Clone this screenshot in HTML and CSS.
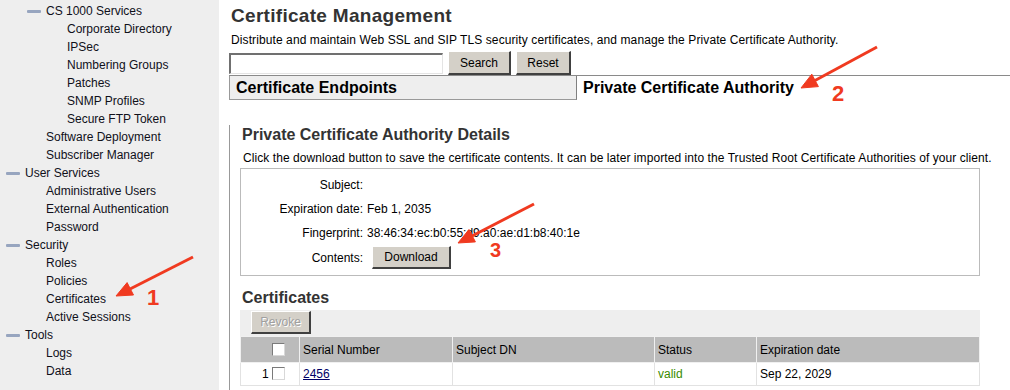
FILE: index.html
```html
<!DOCTYPE html>
<html lang="en">

<head>
    <meta charset="utf-8">
    <title>Certificate Management</title>
    <link rel="stylesheet" href="styles.css">
</head>

<body>
    <div class="page">
        <nav class="sidebar">
            <ul class="tree sub">
                <li class="open">
                    <div class="row"><span class="tg"></span>CS 1000 Services</div>
                    <ul class="tree">
                        <li><div class="row"><span class="tg"></span>Corporate Directory</div></li>
                        <li><div class="row"><span class="tg"></span>IPSec</div></li>
                        <li><div class="row"><span class="tg"></span>Numbering Groups</div></li>
                        <li><div class="row"><span class="tg"></span>Patches</div></li>
                        <li><div class="row"><span class="tg"></span>SNMP Profiles</div></li>
                        <li><div class="row"><span class="tg"></span>Secure FTP Token</div></li>
                    </ul>
                </li>
                <li><div class="row"><span class="tg"></span>Software Deployment</div></li>
                <li><div class="row"><span class="tg"></span>Subscriber Manager</div></li>
            </ul>
            <ul class="tree root">
                <li class="open">
                    <div class="row"><span class="tg"></span>User Services</div>
                    <ul class="tree">
                        <li><div class="row"><span class="tg"></span>Administrative Users</div></li>
                        <li><div class="row"><span class="tg"></span>External Authentication</div></li>
                        <li><div class="row"><span class="tg"></span>Password</div></li>
                    </ul>
                </li>
                <li class="open">
                    <div class="row"><span class="tg"></span>Security</div>
                    <ul class="tree">
                        <li><div class="row"><span class="tg"></span>Roles</div></li>
                        <li><div class="row"><span class="tg"></span>Policies</div></li>
                        <li><div class="row"><span class="tg"></span>Certificates</div></li>
                        <li><div class="row"><span class="tg"></span>Active Sessions</div></li>
                    </ul>
                </li>
                <li class="open">
                    <div class="row"><span class="tg"></span>Tools</div>
                    <ul class="tree">
                        <li><div class="row"><span class="tg"></span>Logs</div></li>
                        <li><div class="row"><span class="tg"></span>Data</div></li>
                    </ul>
                </li>
            </ul>
        </nav>

        <main class="main">
            <h1 class="title">Certificate Management</h1>
            <p class="desc">Distribute and maintain Web SSL and SIP TLS security certificates, and manage the Private Certificate Authority.</p>
            <form class="search" onsubmit="return false">
                <input type="text" class="search-input">
                <button class="btn btn-search">Search</button>
                <button class="btn btn-reset">Reset</button>
            </form>

            <div class="tabs">
                <div class="tab">Certificate Endpoints</div>
                <div class="tab active">Private Certificate Authority</div>
            </div>

            <div class="panel">
                <h2 class="section-title first">Private Certificate Authority Details</h2>
                <p class="hint">Click the download button to save the certificate contents. It can be later imported into the Trusted Root Certificate Authorities of your client.</p>
                <div class="details">
                    <div class="lbl">Subject:</div>
                    <div class="val"></div>
                    <div class="lbl">Expiration date:</div>
                    <div class="val">Feb 1, 2035</div>
                    <div class="lbl">Fingerprint:</div>
                    <div class="val">38:46:34:ec:b0:55:d9:a0:ae:d1:b8:40:1e</div>
                    <div class="lbl mid">Contents:</div>
                    <div class="val mid"><button class="btn btn-download">Download</button></div>
                </div>

                <h2 class="section-title">Certificates</h2>
                <div class="toolbar">
                    <button class="btn btn-revoke" disabled>Revoke</button>
                </div>
                <table class="cert-table">
                    <thead>
                        <tr>
                            <th class="col-check"><input type="checkbox" class="chk"></th>
                            <th class="col-serial">Serial Number</th>
                            <th class="col-dn">Subject DN</th>
                            <th class="col-status">Status</th>
                            <th>Expiration date</th>
                        </tr>
                    </thead>
                    <tbody>
                        <tr>
                            <td class="col-check">1 <input type="checkbox" class="chk"></td>
                            <td><a href="#" class="serial">2456</a></td>
                            <td></td>
                            <td class="valid">valid</td>
                            <td>Sep 22, 2029</td>
                        </tr>
                    </tbody>
                </table>
            </div>
        </main>
    </div>

    <svg class="marks" width="1010" height="390" viewBox="0 0 1010 390">
        <g fill="#f03a20" stroke="#f03a20">
            <line x1="193" y1="257" x2="130" y2="289" stroke-width="3" />
            <polygon points="116,296 133.5,295 127.1,282.6" stroke-width="1" />
            <line x1="877" y1="47" x2="815" y2="80.5" stroke-width="3" />
            <polygon points="801,88 818.4,86.6 811.8,74.2" stroke-width="1" />
            <line x1="534" y1="204" x2="472" y2="236" stroke-width="3" />
            <polygon points="458,243 475.4,241.9 469,229.5" stroke-width="1" />
        </g>
        <g class="mark-num" fill="#f03a20">
            <text x="147" y="305">1</text>
            <text x="832" y="101">2</text>
            <text x="490" y="257" class="small">3</text>
        </g>
    </svg>
</body>

</html>
```

FILE: styles.css
```css
body {
    margin: 0;
    font-family: "Liberation Sans", Arial, sans-serif;
    font-size: 12px;
    color: #000;
    background: #fff;
    overflow: hidden;
}

.page {
    display: flex;
    height: 390px;
    overflow: hidden;
}

/* left navigation tree */
.sidebar {
    width: 219px;
    flex-shrink: 0;
    background: #eeeeee;
    padding-top: 2px;
    color: #10101a;
}

.tree {
    list-style: none;
    margin: 0;
    padding: 0 0 0 21px;
}

.tree.root {
    padding-left: 6px;
}

.tree.sub {
    padding-left: 27px;
}

.row {
    display: flex;
    align-items: center;
    height: 18px;
    white-space: nowrap;
}

.tg {
    width: 19px;
    flex-shrink: 0;
    display: flex;
    align-items: center;
}

.open > .row .tg::before {
    content: "";
    width: 14px;
    height: 3px;
    border-radius: 1px;
    background: #97a5bf;
}

/* main area */
.main {
    flex: 1;
    padding-left: 10px;
    min-width: 0;
}

.title {
    margin: 0 0 0 2px;
    padding-top: 4px;
    font-size: 19px;
    line-height: 24px;
    font-weight: bold;
    letter-spacing: 0.3px;
    color: #333;
}

.desc {
    margin: 4px 0 0 2px;
    line-height: 16px;
    letter-spacing: 0.1px;
}

.search {
    display: flex;
    align-items: center;
    height: 24px;
    margin: 3px 0 0;
}

.search-input {
    box-sizing: border-box;
    width: 214px;
    height: 21px;
    margin: 0;
    border-style: solid;
    border-width: 2px 1px 1px 2px;
    border-color: #707070 #e4e4e4 #e4e4e4 #707070;
    background: #fff;
}

.btn {
    box-sizing: border-box;
    height: 24px;
    margin: 0;
    padding: 0;
    font-family: "Liberation Sans", Arial, sans-serif;
    font-size: 12px;
    color: #000;
    background: #d4d0c8;
    border-style: solid;
    border-width: 1px 2px 2px 1px;
    border-color: #ffffff #404040 #404040 #ffffff;
}

.btn-search {
    width: 63px;
    margin-left: 5px;
}

.btn-reset {
    width: 55px;
    margin-left: 5px;
}

/* tabs */
.tabs {
    display: flex;
    border-top: 1px solid #8a8a8a;
}

.tab {
    box-sizing: border-box;
    height: 24px;
    padding-left: 6px;
    font-size: 16px;
    font-weight: bold;
    line-height: 23px;
    white-space: nowrap;
}

.tab:first-child {
    width: 348px;
    background: #eeeeee;
    border-left: 1px solid #999;
    border-right: 1px solid #808080;
    border-bottom: 1px solid #999;
}

.tab.active {
    background: #fff;
}

.panel {
    border-left: 1px solid #999;
    padding: 0 0 20px 10px;
    width: 740px;
}

.section-title {
    margin: 12px 0 0 2px;
    font-size: 16px;
    line-height: 20px;
    font-weight: bold;
    color: #333;
}

.section-title.first {
    margin-top: 25px;
}

.hint {
    margin: 5px 0 0 3px;
    line-height: 16px;
    letter-spacing: 0.07px;
    white-space: nowrap;
}

.details {
    box-sizing: border-box;
    margin-top: 2px;
    width: 740px;
    border: 1px solid #bbbbbb;
    padding: 8px 0 6px;
    display: grid;
    grid-template-columns: 122px 1fr;
    grid-template-rows: 24px 24px 21px 23px;
    column-gap: 4px;
    line-height: 16px;
}

.lbl {
    text-align: right;
}

.mid {
    align-self: center;
}

.btn-download {
    width: 79px;
    height: 23px;
    margin-left: 5px;
}

.toolbar {
    margin-top: 2px;
    height: 26px;
    width: 740px;
    background: #eeeeee;
    padding: 1px 0 0 11px;
    box-sizing: border-box;
}

.btn-revoke {
    width: 60px;
    height: 23px;
    color: #a0a0a0;
    text-shadow: 1px 1px 0 #fff;
}

/* certificate list */
.cert-table {
    width: 740px;
    border-collapse: collapse;
    table-layout: fixed;
}

.cert-table th {
    height: 25px;
    padding: 0 3px;
    background: #bbbbbb;
    border: 1px solid #f0f0f0;
    font-weight: normal;
    text-align: left;
}

.cert-table td {
    height: 22px;
    padding: 0 3px;
    border: 1px solid #e2e2e2;
    border-top: none;
}

.cert-table .col-check {
    width: 59px;
    box-sizing: border-box;
    text-align: right;
    padding-right: 14px;
    white-space: nowrap;
}

.col-serial {
    width: 153px;
    box-sizing: border-box;
}

.col-dn {
    width: 202px;
    box-sizing: border-box;
}

.col-status {
    width: 102px;
    box-sizing: border-box;
}

.chk {
    -webkit-appearance: none;
    appearance: none;
    width: 13px;
    height: 13px;
    margin: 0;
    vertical-align: -2px;
    background: #fff;
    border-style: solid;
    border-width: 1px;
    border-color: #7a7a7a #d8d8d8 #d8d8d8 #7a7a7a;
}

.serial {
    color: #000066;
    text-decoration: underline;
}

.valid {
    color: #3a8c00;
}

/* annotation overlay */
.marks {
    position: absolute;
    left: 0;
    top: 0;
    pointer-events: none;
}

.mark-num text {
    font-family: "Liberation Sans", Arial, sans-serif;
    font-size: 22px;
    font-weight: bold;
}

.mark-num text.small {
    font-size: 20px;
}
```
